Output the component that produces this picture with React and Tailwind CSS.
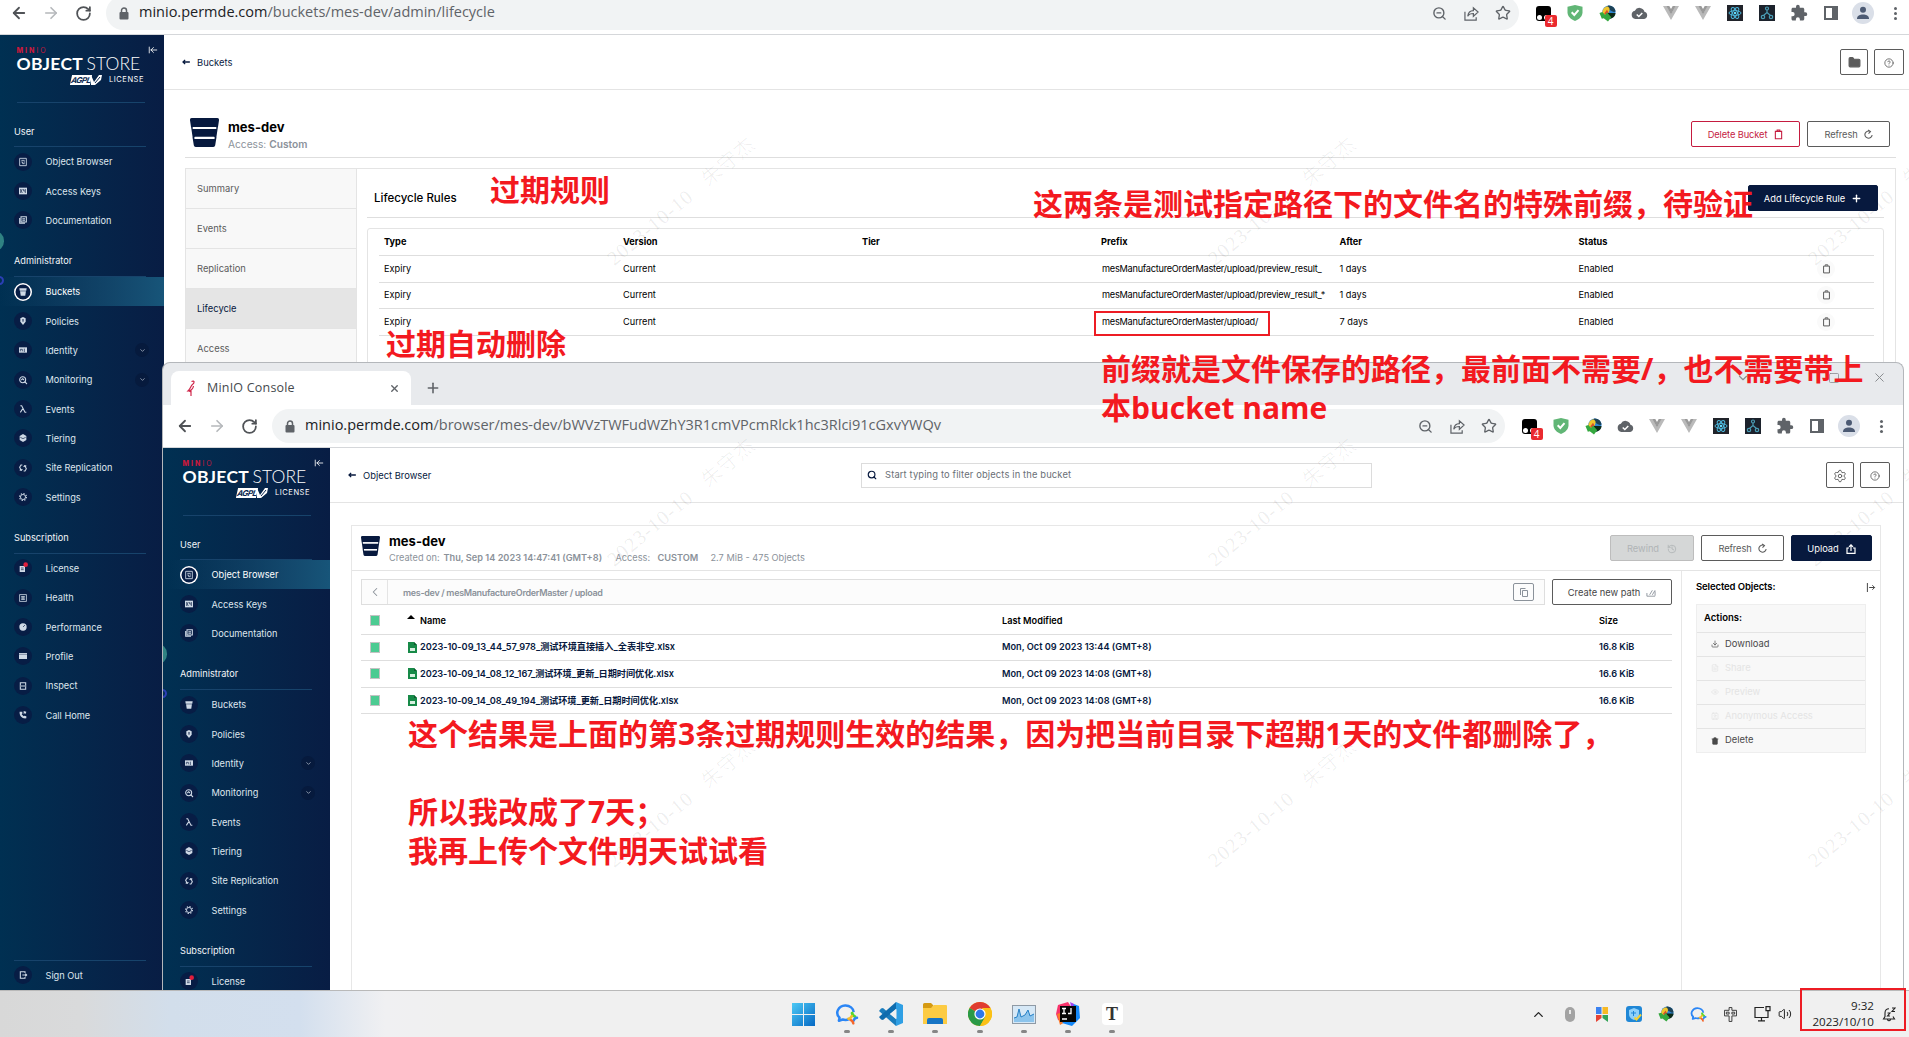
import React from "react";
import {
  ArrowLeft, ArrowRight, RotateCw, ZoomOut, Star, Puzzle, X, Plus, Search, Settings, CircleHelp,
  ChevronDown, ChevronUp, ChevronLeft, Folder, Volume2, Trash2, Copy, Download,
  History, ArrowLeftToLine, Square, FileText, Eye, Contact,
} from "lucide-react";

const svgBase = { fill: "none", stroke: "currentColor", strokeWidth: 1.6 };

/* ---------- shared small icons ---------- */

function BucketIcon({ className }) {
  return (
    <svg viewBox="0 0 29 29" className={className} preserveAspectRatio="none" fill="currentColor">
      <path d="M2 0h25a2 2 0 0 1 2 2.200l-1 6.800H1L0 2.200A2 2 0 0 1 2 0zM1.100 9h1.600v2H1.400zM26.300 9h1.600l-.3 2h-1.300zM1.400 11h26.200l-1.200 8H2.600zM2.500 19h2v2.200H2.800zM24.500 19h2l-.3 2.200h-1.700zM2.800 21h23.400l-1 6.300A2 2 0 0 1 23.200 29H5.800a2 2 0 0 1-2-1.700z" />
      <path d="M3 10h23M4.800 19.700h19.400" stroke="#fff" strokeWidth="1.900" />
    </svg>
  );
}

function TrashIcon({ className }) {
  return (
    <svg viewBox="0 0 10 12" className={className} fill="none" stroke="currentColor" strokeWidth="1.200">
      <path d="M1.500 2.500h7v8.200H1.500zM3.500 2V1h3v1" />
    </svg>
  );
}

function RefreshIcon({ className }) {
  return (
    <svg viewBox="0 0 10 12" className={className} fill="none" stroke="currentColor" strokeWidth="1.200">
      <path d="M7 2.600A4 4 0 1 0 9 6.500M4.600 1l2.600 1.700L5 5" />
    </svg>
  );
}

function IdmIcon({ className }) {
  return (
    <svg viewBox="0 0 18 18" className={className}>
      <circle cx="10.500" cy="7.500" r="7" fill="#2f86d0" />
      <path d="M10 .5a7 7 0 0 1 7.500 6.500c-2 1.500-4-1-6.500-2S7 2 10 .5z" fill="#1d4257" />
      <path d="M3.500 8C4 3 8 .5 10 2s1.500 4-.5 7-5 2-6-1z" fill="#f0c52c" />
      <path d="M5.500 9l3-4 1.500 3-2 3z" fill="#d8502c" />
      <path d="M9 8.500h8.500c0 3-2.500 5.500-6 6z" fill="#0d2a18" />
      <path d="M.5 8.500l3-1 3 3 2-2.500L13 13l-3.500 4.500L5 14l-2 .5z" fill="#35a83f" />
    </svg>
  );
}

/* ---------- browser chrome ---------- */

const slot = "flex h-8 w-8 shrink-0 items-center justify-center";

function Extensions() {
  return (
    <div className="ml-2 flex shrink-0 items-center text-[#5f6368]">
      <div className={slot}>
        <span className="relative h-[15px] w-[15px] rounded-[3px] bg-black">
          <span className="absolute bottom-[1px] left-[1px] h-[5px] w-[5px] rounded-full bg-white" />
          <span className="absolute bottom-[1px] left-[8px] h-[5px] w-[5px] rounded-full bg-white" />
          <span className="absolute left-[9px] top-[9px] flex h-[12px] w-[12px] items-center justify-center rounded-[2px] bg-[#ea2a2f] font-['Open_Sans'] text-[10px] leading-none text-white">4</span>
        </span>
      </div>
      <div className={slot}>
        <svg viewBox="0 0 16 16" className="h-4 w-4">
          <path d="M8 0l7.500 1.800v5.500C15.500 11.500 12 14.500 8 16 4 14.500.5 11.500.5 7.300V1.800z" fill="#61b676" />
          <path d="M4.700 7.300l2.600 2.700 4.200-4.800" fill="none" stroke="#fff" strokeWidth="2" />
        </svg>
      </div>
      <div className={slot}><IdmIcon className="h-[17px] w-[17px]" /></div>
      <div className={slot}>
        <svg viewBox="0 0 18 14" className="h-[13px] w-[17px]">
          <path d="M14.300 5.200A5.500 5.500 0 0 0 4 4 4.600 4.600 0 0 0 4.500 13H14a4 4 0 0 0 .3-7.800z" fill="#5f6368" />
          <path d="M6 8l2.300 2.300L12 6.500" fill="none" stroke="#fff" strokeWidth="1.600" />
        </svg>
      </div>
      {[0, 1].map((i) => (
        <div key={i} className={slot}>
          <svg viewBox="0 0 16 14" className="h-[14px] w-4">
            <path d="M0 0h3.500L8 8l4.500-8H16L8 14z" fill="#bababa" />
            <path d="M3.300 0h3L8 3l1.700-3h3L8 8.500z" fill="#9a9a9a" />
          </svg>
        </div>
      ))}
      <div className={slot}>
        <svg viewBox="0 0 16 16" className="h-4 w-4">
          <rect width="16" height="16" fill="#20232a" />
          <g fill="none" stroke="#4cb7dc">
            <ellipse cx="8" cy="8" rx="6" ry="2.400" />
            <ellipse cx="8" cy="8" rx="6" ry="2.400" transform="rotate(60 8 8)" />
            <ellipse cx="8" cy="8" rx="6" ry="2.400" transform="rotate(120 8 8)" />
          </g>
          <circle cx="8" cy="8" r="1.300" fill="#61dafb" />
        </svg>
      </div>
      <div className={slot}>
        <svg viewBox="0 0 16 16" className="h-4 w-4">
          <rect width="16" height="16" fill="#1c222c" />
          <g fill="none" stroke="#4a9db5" strokeWidth="1.200">
            <circle cx="8" cy="3.500" r="1.500" /><circle cx="4" cy="12" r="1.700" /><circle cx="12" cy="12" r="1.700" />
            <path d="M8 5v2.500L4.500 10.500M8 7.500l3.500 3" />
          </g>
        </svg>
      </div>
      <div className={slot}>
        <svg viewBox="0 0 24 24" className="h-[18px] w-[18px]" fill="#5f6368">
          <path d="M20.500 11H19V7c0-1.100-.9-2-2-2h-4V3.500a2.500 2.500 0 0 0-5 0V5H4c-1.100 0-2 .9-2 2v3.800h1.500a2.700 2.700 0 0 1 0 5.400H2V20c0 1.100.9 2 2 2h3.800v-1.500a2.700 2.700 0 0 1 5.400 0V22H17c1.100 0 2-.9 2-2v-4h1.500a2.500 2.500 0 0 0 0-5z" />
        </svg>
      </div>
      <div className={slot}>
        <span className="h-[14px] w-[14px] border-2 border-r-[6px] border-[#5f6368]" />
      </div>
      <div className={slot}>
        <svg viewBox="0 0 22 22" className="h-[22px] w-[22px]">
          <circle cx="11" cy="11" r="11" fill="#dadfe8" />
          <circle cx="11" cy="7.800" r="3" fill="#4c5a73" />
          <path d="M5 16.500c0-5.500 12-5.500 12 0v.5H5z" fill="#4c5a73" />
        </svg>
      </div>
      <div className={`${slot} flex-col gap-[2px]`}>
        <span className="h-[3px] w-[3px] rounded-full bg-[#5f6368]" />
        <span className="h-[3px] w-[3px] rounded-full bg-[#5f6368]" />
        <span className="h-[3px] w-[3px] rounded-full bg-[#5f6368]" />
      </div>
    </div>
  );
}

function Toolbar({ path, className }) {
  return (
    <div className={`flex h-[43px] shrink-0 items-center border-b border-[#d5d7da] bg-white ${className}`}>
      <div className={`${slot} text-[#505357]`}><ArrowLeft size={18} strokeWidth={2.400} /></div>
      <div className={`${slot} text-[#b5b8bb]`}><ArrowRight size={18} strokeWidth={2.200} /></div>
      <div className={`${slot} text-[#505357]`}><RotateCw size={17} strokeWidth={2.500} /></div>
      <div className="ml-[7px] flex h-[34px] min-w-0 flex-1 items-center rounded-full bg-[#f1f3f4] pl-[13px]">
        <svg viewBox="0 0 10 13" className="h-[13px] w-[10px]">
          <path d="M2.500 6V3.500a2.500 2.500 0 0 1 5 0V6" fill="none" stroke="#5f6368" strokeWidth="1.500" />
          <rect x=".5" y="5" width="9" height="7.500" rx="1" fill="#5f6368" />
        </svg>
        <div className="mb-[2px] ml-[10px] flex-1 whitespace-nowrap font-['Open_Sans'] text-[14.500px] leading-none text-[#5f6368]">
          <span className="text-[#202124]">minio.permde.com</span>{path}
        </div>
        <div className="flex text-[#5f6368]">
          <div className={slot}><ZoomOut size={15} strokeWidth={2.200} /></div>
          <div className={slot}>
            <svg viewBox="0 0 16 16" className="h-[15px] w-[15px]" {...svgBase}>
              <path d="M1 6v9h12v-3M4 11c.5-4 3-6 6-6V2l5 4.500-5 4.500V8c-3 0-5 1-6 3z" strokeWidth="1.300" />
            </svg>
          </div>
          <div className={slot}><Star size={16} strokeWidth={2} /></div>
        </div>
      </div>
      <Extensions />
    </div>
  );
}

/* ---------- MinIO side menu ---------- */

const glyphs = {
  browser: <g {...svgBase} strokeWidth="1.300"><path d="M1 .5h10v11H1zM3.500 3.500h5M3.500 6h2v2.500h3M7 6h2" /></g>,
  keys: <g><rect x="0" y="1" width="12" height="10" fill="currentColor" /><path d="M2.500 3v6M5 3L3.500 6 5 9M7 3v3h2.500M9.500 3v6" stroke="#0a1c44" fill="none" /></g>,
  docs: <g {...svgBase}><path d="M3 1h8v8H3zM5 4h4M5 6.500h4M1 3v8h8" /></g>,
  buckets: <path fill="currentColor" d="M.5.500h11l-.6 3.500H1.100zM1.600 5h8.800l-1 6.500h-6.800z" />,
  policies: <g><path fill="currentColor" d="M6 0l4 2v5L6 12 2 7V2z" /><path d="M6 3v4" stroke="#0a1c44" strokeWidth="1.500" /></g>,
  identity: <g><rect x="0" y="2" width="12" height="8" fill="currentColor" /><path d="M2 8V5h3v3M8 4v5" stroke="#0a1c44" fill="none" /></g>,
  monitoring: <g {...svgBase}><circle cx="5.500" cy="5.500" r="4.500" /><path d="M8.500 8.500L12 12M3.500 6l2-2 2 2" /></g>,
  events: <g {...svgBase}><path d="M2 1h2l5 10h2M6 5l-4 6" /></g>,
  tiering: <g><path fill="currentColor" d="M6 0l5 3v6l-5 3-5-3V3z" /><path d="M2 5l4 2 4-2" stroke="#0a1c44" fill="none" /></g>,
  replication: <g {...svgBase}><path d="M5 1.500H3L1 5l2 4M5 7.500L3.500 9.500 1 9M7 10.500h2L11 7 9 3M7 4.500L8.500 2.500 11 3" /></g>,
  settings: <g {...svgBase}><circle cx="6" cy="6" r="3.800" strokeWidth="1.400" /><circle cx="6" cy="6" r="5.200" strokeWidth="1.600" strokeDasharray="2 2.080" /></g>,
  license: <g><path fill="currentColor" d="M1 3h8v9H1z" /><path d="M3 6h4M3 8.500h4" stroke="#0a1c44" /><circle cx="10" cy="1" r="3.500" fill="#e01e3c" /></g>,
  health: <g {...svgBase} strokeWidth="1.200"><rect x="1" y="1" width="10" height="10" /><path d="M3 4h6M3 6h6M3 8h6M6 3v6" /></g>,
  performance: <g><circle cx="6" cy="6" r="5.500" fill="currentColor" /><path d="M6 6l3-3" stroke="#0a1c44" /></g>,
  profile: <g><path fill="currentColor" d="M0 1.500h12v9H0z" /><path d="M0 3.500h12" stroke="#0a1c44" strokeWidth=".6" /></g>,
  inspect: <g {...svgBase}><path d="M2 5V1h8v4M2 7v4h8V7M1 6h10" /></g>,
  call: <path fill="currentColor" d="M1 1l4 0v3L4 5l3 3 1-1 3 1v3C5 12 0 7 1 1zM7 0l4 1-1 4-1-2-2 2z" />,
  signout: <g {...svgBase}><path d="M9 3V1H2v10h7V9M5 6h7M9.500 4l2 2-2 2" /></g>,
};

const userItems = [["Object Browser", "browser"], ["Access Keys", "keys"], ["Documentation", "docs"]];
const adminItems = [
  ["Buckets", "buckets"], ["Policies", "policies"], ["Identity", "identity", true], ["Monitoring", "monitoring", true],
  ["Events", "events"], ["Tiering", "tiering"], ["Site Replication", "replication"], ["Settings", "settings"],
];
const subItems = [
  ["License", "license"], ["Health", "health"], ["Performance", "performance"],
  ["Profile", "profile"], ["Inspect", "inspect"], ["Call Home", "call"],
];

function MenuItem({ label, glyph, expandable, active }) {
  return (
    <div className={`flex h-[29.330px] shrink-0 items-center pl-[14px] ${active ? "bg-gradient-to-r from-transparent to-[#175579] text-white" : "text-[#dfe6ee]"}`}>
      <span className={`flex h-[18px] w-[18px] items-center justify-center rounded-full bg-[#071d45] ${active ? "ring-[1.500px] ring-white ring-inset" : ""}`}>
        <svg viewBox="0 0 12 12" className="h-[8px] w-[8px] overflow-visible text-[#cfd9e6]">{glyphs[glyph]}</svg>
      </span>
      <span className="ml-[13.500px] whitespace-nowrap pt-px">{label}</span>
      {expandable && (
        <span className="ml-auto mr-[15px] flex h-[14px] w-[14px] items-center justify-center rounded-full bg-[#061a3d]">
          <ChevronDown size={7} />
        </span>
      )}
    </div>
  );
}

function MenuGroup({ title, items, activeLabel }) {
  return (
    <div className="shrink-0">
      <div className="flex h-[42px] items-end pl-[14px] pr-[18px]">
        <div className="w-full border-b border-[#17436b] pb-[8.500px] leading-[12px] text-[#f2f5f8]">{title}</div>
      </div>
      {items.map(([label, glyph, expandable]) => (
        <MenuItem key={label} label={label} glyph={glyph} expandable={expandable} active={label === activeLabel} />
      ))}
    </div>
  );
}

function SideMenu({ active, className, signOut }) {
  return (
    <div className={`relative flex shrink-0 flex-col overflow-hidden bg-gradient-to-r from-[#003052] to-[#081d44] text-[9.200px] ${className}`}>
      <div className="flex h-[70px] shrink-0 flex-col pl-[16.500px] pr-[19px] pt-[11px]">
        <div className="flex h-[8px] items-center justify-between">
          <span className="text-[7px] font-extrabold leading-none tracking-[2px] text-[#c8193c]">MIN<span className="font-normal">IO</span></span>
          <ArrowLeftToLine size={10} strokeWidth={2} className="-mr-[13px] text-white" />
        </div>
        <div className="mt-[1px] whitespace-nowrap font-[Lato] text-[17.500px] leading-[17px] text-white">
          <b className="tracking-[0.250px]">OBJECT</b> <span className="-ml-[1px] font-light tracking-[0.100px]">STORE</span>
        </div>
        <div className="mt-[2px] flex h-[11px] items-center justify-end gap-[7px] pr-px text-white">
          <span className="flex items-center">
            <span className="flex h-[10px] w-[20px] -skew-x-12 items-center justify-center bg-white text-[8px] font-bold italic leading-none tracking-[-0.500px] text-[#0a2750]">AGPL</span>
            <svg viewBox="0 0 11 10" className="h-[10px] w-[11px]"><path d="M0 0l3 7 5-7 3 0-1 5-6 5H0z" fill="#fff" /><path d="M4 8l5-6" stroke="#0a2750" /></svg>
          </span>
          <span className="text-[7.500px] leading-none tracking-[0.550px]">LICENSE</span>
        </div>
        <div className="mt-[17px] h-px shrink-0 bg-[#17436b]" />
      </div>
      <MenuGroup title="User" items={userItems} activeLabel={active} />
      <MenuGroup title="Administrator" items={adminItems} activeLabel={active} />
      <MenuGroup title="Subscription" items={subItems} activeLabel={active} />
      {signOut && (
        <div className="mt-auto">
          <div className="ml-[14px] mr-[18px] h-px bg-[#17436b]" />
          <MenuItem label="Sign Out" glyph="signout" />
        </div>
      )}
      <span className="absolute -left-[15px] top-[196px] h-[20px] w-[19px] rounded-full bg-[#2f8282]" />
      <span className="absolute -left-[5px] top-[241px] h-[9px] w-[9px] rounded-full border-2 border-[#2b3fb5]" />
    </div>
  );
}

/* ---------- buttons ---------- */

function Button({ children, className }) {
  return (
    <div className={`flex h-[26px] shrink-0 items-center justify-center rounded-[2px] border text-[9.300px] leading-none whitespace-nowrap pt-px ${className}`}>
      {children}
    </div>
  );
}

function BackLink({ label }) {
  return (
    <div className="flex items-center gap-[7px] pt-[2px] text-[9.400px] text-[#07193e]">
      <svg viewBox="0 0 9 7" className="mb-[2px] h-[6px] w-[8px]" fill="none" stroke="currentColor" strokeWidth="1.500"><path d="M9 3.500H1M3.500 1L1 3.500 3.500 6" /></svg>
      <span>{label}</span>
    </div>
  );
}

/* ---------- lifecycle page ---------- */

const rules = [
  ["Expiry", "Current", "", "mesManufactureOrderMaster/upload/preview_result_", "1 days", "Enabled"],
  ["Expiry", "Current", "", "mesManufactureOrderMaster/upload/preview_result_*", "1 days", "Enabled"],
  ["Expiry", "Current", "", "mesManufactureOrderMaster/upload/", "7 days", "Enabled"],
];
const ruleGrid = "grid grid-cols-[239px_239px_239px_238.500px_239px_auto] items-center border-b border-[#dedede] pl-[5px] whitespace-nowrap";

function LifecyclePage() {
  return (
    <div className="flex min-w-0 flex-1 flex-col bg-white">
      <div className="flex h-[55px] shrink-0 items-center justify-between border-b border-[#e4e4e4] pl-[18px] pr-[5px]">
        <BackLink label="Buckets" />
        <div className="flex gap-[6px] text-[#5b5b5b]">
          <Button className="w-[28px] border-[#5b5b5b]"><Folder size={13} fill="currentColor" /></Button>
          <Button className="w-[30px] border-[#5b5b5b]"><CircleHelp size={10} /></Button>
        </div>
      </div>
      <div className="ml-[21px] mr-[13px] mt-[17px] flex h-[51px] shrink-0 border-b border-[#dedede] pl-[5px] pr-[6px]">
        <BucketIcon className="mt-[11px] h-[29px] w-[29px] text-[#07193e]" />
        <div className="ml-[9px] pt-[13px]">
          <div className="text-[13px] font-bold leading-[15px] text-black">mes-dev</div>
          <div className="mt-[3px] text-[10.200px] leading-[12px] text-[#8b929a]">Access: <span className="font-semibold">Custom</span></div>
        </div>
        <div className="ml-auto flex gap-[7px] pt-[14px]">
          <Button className="w-[109px] gap-[7px] border-[#c51b3f] tracking-[-0.100px] text-[#c51b3f]">Delete Bucket<TrashIcon className="h-[11px] w-[9px]" /></Button>
          <Button className="w-[83px] gap-[6px] border-[#5b5b5b] tracking-[-0.100px] text-[#5b5b5b]">Refresh<RefreshIcon className="h-[11px] w-[9px]" /></Button>
        </div>
      </div>
      <div className="ml-[21px] mr-[13px] mt-[10px] flex min-h-0 flex-1 border border-[#e4e4e4]">
        <div className="w-[171px] shrink-0 border-r border-[#e4e4e4] bg-[#f8f8f8] text-[9.400px] text-[#5b5b5b]">
          {["Summary", "Events", "Replication", "Lifecycle", "Access"].map((t) => (
            <div key={t} className={`flex h-[40px] items-center border-b border-[#e4e4e4] pl-[11px] pt-[2px] ${t === "Lifecycle" ? "bg-[#e5e5e5] text-[#07193e]" : ""}`}>{t}</div>
          ))}
        </div>
        <div className="flex min-w-0 flex-1 flex-col pl-[10px] pr-[11px]">
          <div className="flex h-[49px] shrink-0 items-center justify-between border-b border-[#dedede] pl-[7px] pr-[6px] pt-[10px]">
            <span className="pt-[2px] text-[11.500px] font-medium text-black">Lifecycle Rules</span>
            <Button className="w-[130px] gap-[6px] border-[#07193e] bg-[#07193e] text-white">Add Lifecycle Rule<Plus size={11} strokeWidth={3} /></Button>
          </div>
          <div className="mt-[10px] min-h-0 flex-1 rounded-t-[3px] border border-[#e4e4e4] pl-[11px] pr-[9px] text-[9.200px] text-black">
            <div className={`${ruleGrid} h-[27px] font-bold`}>
              <span>Type</span><span>Version</span><span>Tier</span><span>Prefix</span><span>After</span><span>Status</span>
            </div>
            {rules.map((r, i) => (
              <div key={i} className={`${ruleGrid} h-[26.600px]`}>
                {r.slice(0, 5).map((c, j) => <span key={j} className={j === 3 ? "pl-px tracking-[-0.250px]" : ""}>{c}</span>)}
                <span className="flex items-center justify-between pr-[39px]">
                  {r[5]}
                  <span className="flex h-[18px] w-[18px] items-center justify-center rounded-full bg-[#fafafa] text-[#5b5b5b]"><TrashIcon className="h-[10px] w-[9px]" /></span>
                </span>
              </div>
            ))}
          </div>
        </div>
      </div>
    </div>
  );
}

/* ---------- object browser page ---------- */

const files = [
  ["2023-10-09_13_44_57_978_测试环境直接插入_全表非空.xlsx", "Mon, Oct 09 2023 13:44 (GMT+8)", "16.8 KiB"],
  ["2023-10-09_14_08_12_167_测试环境_更新_日期时间优化.xlsx", "Mon, Oct 09 2023 14:08 (GMT+8)", "16.6 KiB"],
  ["2023-10-09_14_08_49_194_测试环境_更新_日期时间优化.xlsx", "Mon, Oct 09 2023 14:08 (GMT+8)", "16.6 KiB"],
];
const actions = [
  ["Download", Download, true], ["Share", FileText], ["Preview", Eye], ["Anonymous Access", Contact], ["Delete", Trash2, true],
];
const fileGrid = "grid grid-cols-[37px_595px_597px_auto] items-center border-b border-[#dedede] pl-[9px] text-[9.200px] font-semibold whitespace-nowrap";

function Check() {
  return <span className="h-[11px] w-[10px] border border-[#c3c3c3] bg-[#4ccb92]" />;
}

function ObjectBrowserPage() {
  return (
    <div className="flex min-w-0 flex-1 flex-col bg-white">
      <div className="flex h-[55px] shrink-0 items-center border-b border-[#e4e4e4] pl-[18px] pr-[13px]">
        <div className="w-[513px]"><BackLink label="Object Browser" /></div>
        <div className="flex h-[25px] w-[511px] items-center border border-[#dcdcdc] pl-[5px] text-[9.400px] text-[#6a6f76]">
          <Search size={10} strokeWidth={2.800} className="text-[#07193e]" />
          <span className="ml-[8px] tracking-[0.130px]">Start typing to filter objects in the bucket</span>
        </div>
        <div className="ml-auto flex gap-[6px] text-[#5b5b5b]">
          <Button className="w-[28px] border-[#5b5b5b]"><Settings size={14} strokeWidth={1.600} /></Button>
          <Button className="w-[30px] border-[#5b5b5b]"><CircleHelp size={10} /></Button>
        </div>
      </div>
      <div className="ml-[21px] mr-[22px] mt-[22px] flex min-h-0 flex-1 flex-col border border-b-0 border-[#e7e7e7]">
        <div className="flex h-[45px] shrink-0 border-b border-[#e4e4e4] pl-[9px] pr-[8px]">
          <BucketIcon className="mt-[10px] h-[20px] w-[19px] text-[#07193e]" />
          <div className="ml-[9px] pt-[8px]">
            <div className="text-[13px] font-bold leading-[14px] text-black">mes-dev</div>
            <div className="mt-[4px] flex whitespace-nowrap text-[9.200px] leading-[12px] text-[#8b929a]">
              <span className="w-[54.500px]">Created on:</span>
              <span className="w-[172px] font-semibold">Thu, Sep 14 2023 14:47:41 (GMT+8)</span>
              <span className="w-[42px]">Access:</span>
              <span className="w-[53px] font-semibold">CUSTOM</span>
              <span>2.7 MiB - 475 Objects</span>
            </div>
          </div>
          <div className="ml-auto flex gap-[7px] pt-[9px]">
            <Button className="w-[84px] gap-[8px] border-[#bdbdbd] bg-[#d5d7d7] text-[#b0b4b6]">Rewind<History size={10} /></Button>
            <Button className="w-[83px] gap-[6px] border-[#5b5b5b] tracking-[-0.100px] text-[#5b5b5b]">Refresh<RefreshIcon className="h-[11px] w-[9px]" /></Button>
            <Button className="w-[81px] gap-[7px] border-[#07193e] bg-[#07193e] text-white">
              Upload
              <svg viewBox="0 0 10 10" className="h-[10px] w-[10px]" fill="none" stroke="currentColor" strokeWidth="1.200"><path d="M3 4H1v5.300h8V4H7M5 7V1M3 2.800L5 .8l2 2" /></svg>
            </Button>
          </div>
        </div>
        <div className="flex min-h-0 flex-1">
          <div className="flex w-[1330px] shrink-0 flex-col border-r border-[#e7e7e7] pl-[9px] pr-[9px] pt-[8px]">
            <div className="flex shrink-0 justify-between">
              <div className="flex h-[26px] w-[1184px] items-center border border-[#dedede] bg-[#fcfcfc]">
                <span className="flex h-full w-[26px] items-center justify-center border-r border-[#e4e4e4] text-[#8b929a]"><ChevronLeft size={14} strokeWidth={1.800} /></span>
                <span className="ml-[15px] pt-px text-[9px] font-semibold tracking-[-0.320px] text-[#8b929a]">mes-dev / mesManufactureOrderMaster / upload</span>
                <span className="ml-auto mr-[10px] flex h-[18px] w-[21px] items-center justify-center rounded-[2px] border border-[#8b929a] text-[#8b929a]">
                  <svg viewBox="0 0 8 9" className="h-[9px] w-[8px]" fill="none" stroke="currentColor"><path d="M2.500 2.500h5v6h-5zM.5 7V.5h5" /></svg>
                </span>
              </div>
              <Button className="w-[120px] gap-[6px] border-[#5b5b5b] bg-white text-[#444]">
                Create new path
                <svg viewBox="0 0 11 8" className="h-[8px] w-[10px] text-[#8b929a]" fill="none" stroke="currentColor"><path d="M1 4v3.500h9M4 6l3-5M7 6l3-5M10 2v5" /></svg>
              </Button>
            </div>
            <div className={`${fileGrid} h-[29.500px] pt-[3px] text-black`}>
              <Check />
              <span className="flex items-center gap-[5px]">
                <span className="-mt-[7px] h-0 w-0 border-x-[4px] border-b-[4px] border-x-transparent border-b-black" />Name
              </span>
              <span>Last Modified</span><span>Size</span>
            </div>
            {files.map(([name, date, size], i) => (
              <div key={name} className={`${fileGrid} h-[26.600px] text-[#07193e]`}>
                <Check />
                <span className={`flex items-center gap-[3px] pl-px font-['Inter','Noto_Sans_CJK_SC',sans-serif] ${i ? "tracking-[-0.060px]" : "tracking-[-0.030px]"}`}>
                  <svg viewBox="0 0 9 11" className="h-[11px] w-[9px]"><path d="M0 0h6l3 3v8H0z" fill="#178a48" /><path d="M2 6h5v3H2z" fill="#d8f0e0" /><path d="M6 0l3 3H6z" fill="#0c5c2e" /></svg>
                  {name}
                </span>
                <span>{date}</span><span>{size}</span>
              </div>
            ))}
          </div>
          <div className="min-w-0 flex-1 pl-[14px] pr-[4px]">
            <div className="flex h-[33px] items-center justify-between text-black">
              <span className="pb-px text-[9.500px] font-semibold tracking-[-0.100px]">Selected Objects:</span>
              <svg viewBox="0 0 10 10" className="h-[9px] w-[10px]" fill="none" stroke="#333"><path d="M1 0v10M3 5h6M6.500 2.500L9 5 6.500 7.500" /></svg>
            </div>
            <div className="w-[170px] border border-[#eeeeee] bg-[#f8f8f8]">
              <div className="flex h-[28px] items-center border-b border-[#e4e4e4] pl-[7px] text-[9.500px] font-semibold text-black">Actions:</div>
              {actions.map(([label, Icon, on], i) => (
                <div key={label} className={`flex h-[23.900px] items-center gap-[6px] pl-[14px] text-[9.400px] ${i < 4 ? "border-b border-[#e4e4e4]" : ""} ${on ? "text-[#4a4a4a]" : "text-[#e4e4e4]"}`}>
                  <Icon size={8} fill={label === "Delete" ? "currentColor" : "none"} />{label}
                </div>
              ))}
            </div>
          </div>
        </div>
      </div>
    </div>
  );
}

/* ---------- taskbar ---------- */

function WeComIcon({ className }) {
  return (
    <svg viewBox="0 0 24 22" className={className} fill="none">
      <path d="M14.500 15.600C12 17 9.500 17 7.500 16.200L3.500 17.500l.7-3.300C-1 9.500 3 2 10 1.600c5-.2 8.800 3 9 6.900" stroke="#2b86f5" strokeWidth="2.600" strokeLinejoin="round" />
      <path d="M17.300 9.500c.3 2 1.200 3 3 3.600" stroke="#56d62f" strokeWidth="3" strokeLinecap="round" />
      <path d="M22.500 14.500c-2 .2-3 1.200-3.600 3" stroke="#2b86f5" strokeWidth="2.600" strokeLinecap="round" />
      <path d="M18.600 20.300c-.3-2-1.200-3-3-3.600" stroke="#f5662b" strokeWidth="2.600" strokeLinecap="round" />
      <path d="M13.500 15.500c2-.3 3-1.200 3.500-3" stroke="#f7bd26" strokeWidth="2.600" strokeLinecap="round" />
    </svg>
  );
}

const taskIcons = [
  <svg viewBox="0 0 23 23" className="h-[23px] w-[23px]">
    <defs><linearGradient id="win" x1="0" y1="0" x2="1" y2="1"><stop stopColor="#4cc9f5" /><stop offset="1" stopColor="#0669c4" /></linearGradient></defs>
    <path d="M0 0h11v11H0zM12 0h11v11H12zM0 12h11v11H0zM12 12h11v11H12z" fill="url(#win)" />
  </svg>,
  <WeComIcon className="h-[21px] w-[24px]" />,
  <svg viewBox="0 0 24 24" className="h-[24px] w-[24px]">
    <path d="M2 6.500L4 6l14 12-1 6L0 9z" fill="#1b7dbd" />
    <path d="M17 0L0 15l2 2.500L4 18 18 6z" fill="#0f6cae" />
    <path d="M17 0l7 3v18l-7 3z" fill="#2f9fe4" />
    <path d="M17.500 7v10L11 12z" fill="#f0f0f0" />
  </svg>,
  <svg viewBox="0 0 24 22" className="h-[22px] w-[24px]">
    <path d="M0 1.500A1.500 1.500 0 0 1 1.500 0H8l2.500 2.500L8 6H0z" fill="#d59a12" />
    <path d="M0 5h8l3-3h12a1 1 0 0 1 1 1v18H0z" fill="#fccb43" />
    <path d="M4 21v-4a2 2 0 0 1 2-2h12a2 2 0 0 1 2 2v4z" fill="#1674c5" />
  </svg>,
  <svg viewBox="0 0 24 24" className="h-[24px] w-[24px]">
    <circle cx="12" cy="12" r="12" fill="#fbc116" />
    <path d="M12 12L1.600 6A12 12 0 0 1 22.400 6z" fill="#e03c31" />
    <path d="M1.600 6A12 12 0 0 0 12 24l5.200-9L12 12z" fill="#2a9a47" />
    <path d="M22.400 6A12 12 0 0 1 12 24l5.200-9L14 6z" fill="#fbc116" />
    <circle cx="12" cy="12" r="5.600" fill="#fff" /><circle cx="12" cy="12" r="4.400" fill="#2f78e8" />
  </svg>,
  <svg viewBox="0 0 24 19" className="h-[19px] w-[24px]">
    <rect x=".5" y=".5" width="23" height="18" fill="#d6e8f6" stroke="#8f9aa5" />
    <path d="M2 17v-4l3-1 2-8 2 8 4-2 3-5 2 6 4-2v8z" fill="#8cc4ec" /><path d="M2 13l3-1 2-8 2 8 4-2 3-5 2 6 4-2" fill="none" stroke="#2680c5" />
  </svg>,
  <svg viewBox="0 0 24 24" className="h-[24px] w-[24px]">
    <path d="M2 3l10-3 5 8-8 12-7-2-2-6z" fill="#f8336b" /><path d="M1 12l6-2 2 10-5 3z" fill="#fb7a2a" />
    <path d="M15 1l8 3 1 12-8 8-10-3 8-8z" fill="#1488f8" /><path d="M14 0l4 2-2 5z" fill="#a63cf0" />
    <rect x="4" y="4" width="16" height="16" fill="#050505" />
    <path d="M6 6.500h4M8 6.500v5M6 11.500h4M15 6v5.500h-3M6 17h5" stroke="#fff" strokeWidth="1.300" fill="none" />
  </svg>,
  <span className="flex h-[22px] w-[21px] items-center justify-center rounded-[4px] bg-white font-['Liberation_Serif'] text-[18px] font-bold leading-none text-[#333]">T</span>,
];

function Tray() {
  return (
    <div className="ml-auto flex h-full items-center text-[#222]">
      <div className={slot}><ChevronUp size={15} strokeWidth={2.200} /></div>
      <div className={slot}><span className="flex h-[15px] w-[10px] justify-center rounded-full bg-[#a3a3a3] pt-[3px]"><span className="h-[4px] w-[2px] bg-[#e8e8e8]" /></span></div>
      <div className={slot}>
        <svg viewBox="0 0 12 15" className="h-[15px] w-[12px]"><path d="M0 0h5.500v7H0z" fill="#3b82f0" /><path d="M6.500 0H12v7H6.500z" fill="#f7b924" /><path d="M0 8h5.500v3L0 15z" fill="#e64335" /><path d="M6.500 8H12v7l-5.500-4z" fill="#33a457" /></svg>
      </div>
      <div className={slot}>
        <svg viewBox="0 0 16 16" className="h-4 w-4"><rect width="16" height="16" rx="3" fill="#1f87d6" /><path d="M8 2l5 2v4c0 3-2 5-5 6-3-1-5-3-5-6V4z" fill="#8fd0fa" /><path d="M5 7h5M7.500 5v5" stroke="#1f87d6" /><path d="M8.500 11.500l2 2 4.500-5" stroke="#f7d130" strokeWidth="2" fill="none" /></svg>
      </div>
      <div className={slot}><IdmIcon className="h-[16px] w-[16px]" /></div>
      <div className={slot}><WeComIcon className="h-[15px] w-[17px]" /></div>
      <div className={slot}>
        <svg viewBox="0 0 14 16" className="h-[15px] w-[13px]" fill="none" stroke="#333" strokeWidth="1"><path d="M5.500.500h3v3h5v6h-5v6h-3v-6h-5v-6h5zM2.500 5.500h3v2h-3zM8.500 5.500h3v2h-3z" /></svg>
      </div>
      <div className={slot}>
        <svg viewBox="0 0 17 16" className="h-[16px] w-[17px]" fill="none" stroke="#222" strokeWidth="1.200"><path d="M10 1.500H1v10h13V8M4 14.800h7M7.500 12v3M12 .7h4v4h-4zM14 5v5" /></svg>
      </div>
      <Volume2 size={14} strokeWidth={1.700} />
      <div className="ml-[6px] flex w-[76px] flex-col items-end gap-[3px] pb-[2px] font-['Open_Sans'] text-[11.600px] leading-[13px] text-[#222]">
        <span>9:32</span><span>2023/10/10</span>
      </div>
      <svg viewBox="0 0 14 15" className="ml-[8px] mr-[13px] h-[15px] w-[14px]" fill="none" stroke="#222" strokeWidth="1.100">
        <path d="M7 1.800C4.500 1.800 3 3.500 3 6v3.500L1.500 12h11L11 9.500M5.500 12.500c.5 1.700 2.500 1.700 3 0M5.500 6H8L5.500 9H8M10 1h3l-3 3.500h3" />
      </svg>
    </div>
  );
}

function Taskbar() {
  return (
    <div className="absolute inset-x-0 bottom-0 flex h-[47px] items-center border-t border-[#b9b9b9] bg-[linear-gradient(90deg,#d8d8d8_0px,#d9dadb_80px,#d2deeb_170px,#d3dfee_300px,#f0f0f2_385px,#f0f0f0_450px)]">
      <div className="ml-[781px] flex">
        {taskIcons.map((icon, i) => (
          <div key={i} className="relative flex h-[46px] w-[44.150px] items-center justify-center">
            {icon}
            {i > 0 && <span className="absolute bottom-[4px] h-[3px] w-[6px] rounded-full bg-[#868686]" />}
          </div>
        ))}
      </div>
      <Tray />
    </div>
  );
}

/* ---------- notes and watermark over the desktop ---------- */

function Note({ className, children }) {
  return (
    <div className={`absolute whitespace-nowrap font-['Open_Sans','Noto_Sans_CJK_SC',sans-serif] text-[30px] font-bold leading-[39px] text-[#f3191f] ${className}`}>
      {children}
    </div>
  );
}

const marks = [201, 502, 803].flatMap((y) => [681, 1282, 1882].map((x) => [x, y]));

export default function App() {
  return (
    <div className="relative h-[1037px] w-[1909px] overflow-hidden bg-white font-['Inter',sans-serif]">
      <div className="flex h-[990px] flex-col overflow-hidden">
        <Toolbar path="/buckets/mes-dev/admin/lifecycle" className="-mt-[8px] -mr-[2px] pl-[3px]" />
        <div className="flex min-h-0 flex-1">
          <SideMenu active="Buckets" className="w-[164px]" signOut />
          <LifecyclePage />
        </div>
      </div>

      <div className="absolute left-[162px] top-[362px] flex h-[628px] w-[1742px] flex-col overflow-hidden rounded-t-[8px] border border-b-0 border-[#b4b7bb] bg-[#e8eaed]">
        <div className="flex h-[42px] shrink-0 items-end">
          <div className="ml-[8px] flex h-[34px] w-[240px] items-center rounded-t-[8px] bg-white pl-[15px] pr-[11px]">
            <svg viewBox="0 0 10 16" className="h-[16px] w-[10px]" fill="none" stroke="#d0274b" strokeWidth="1.200"><path d="M5.500 1.500C9 0 8.500 3 6.500 4.500S5.500 7 2 11c3-.5 5-1.500 5.500-5M5 10v6M5 12l-2-1" /></svg>
            <span className="ml-[11px] font-['Open_Sans'] text-[12.500px] tracking-[0.200px] text-[#45494d]">MinIO Console</span>
            <X size={11} strokeWidth={3} className="ml-auto text-[#5f6368]" />
          </div>
          <Plus size={16} strokeWidth={2.400} className="mb-[9px] ml-[14px] text-[#5f6368]" />
          <div className="mb-[20px] ml-auto mr-[16px] flex items-center gap-[32px] text-[#8a8d90]">
            <ChevronDown size={14} /><span className="w-[14px]" /><Square size={12} strokeWidth={1.600} /><X size={15} strokeWidth={1.600} />
          </div>
        </div>
        <Toolbar path="/browser/mes-dev/bWVzTWFudWZhY3R1cmVPcmRlck1hc3Rlci91cGxvYWQv" className="pl-[6px] pr-[6px]" />
        <div className="flex min-h-0 flex-1">
          <SideMenu active="Object Browser" className="w-[167px] pl-[3px]" />
          <ObjectBrowserPage />
        </div>
      </div>

      <Taskbar />

      {marks.map(([x, y]) => (
        <div
          key={`${x}-${y}`}
          className="pointer-events-none absolute flex h-6 w-[186px] -translate-x-1/2 -translate-y-1/2 -rotate-[40deg] items-center justify-between whitespace-pre font-['Liberation_Serif','Noto_Sans_CJK_SC',serif] text-[20px] font-light text-black/[0.080]"
          style={{ left: x, top: y }}
        >
          <span className="tracking-[1.200px]">2023-10-10</span><span className="tracking-[1px]">朱守杰</span>
        </div>
      ))}

      <Note className="left-[490px] top-[170px]">过期规则</Note>
      <Note className="left-[1033px] top-[184px]">这两条是测试指定路径下的文件名的特殊前缀，待验证</Note>
      <Note className="left-[386px] top-[324px]">过期自动删除</Note>
      <Note className="left-[1101px] top-[349px]">前缀就是文件保存的路径，最前面不需要/，也不需要带上<br />本bucket name</Note>
      <Note className="left-[408px] top-[714px]">
        这个结果是上面的第3条过期规则生效的结果，因为把当前目录下超期1天的文件都删除了，<br /><br />所以我改成了7天；<br />我再上传个文件明天试试看
      </Note>
      <div className="absolute left-[1094px] top-[311px] h-[25px] w-[176px] border-2 border-[#ed1c24]" />
      <div className="absolute left-[1800px] top-[988px] h-[43px] w-[106px] border-2 border-[#ed1c24]" />
    </div>
  );
}
